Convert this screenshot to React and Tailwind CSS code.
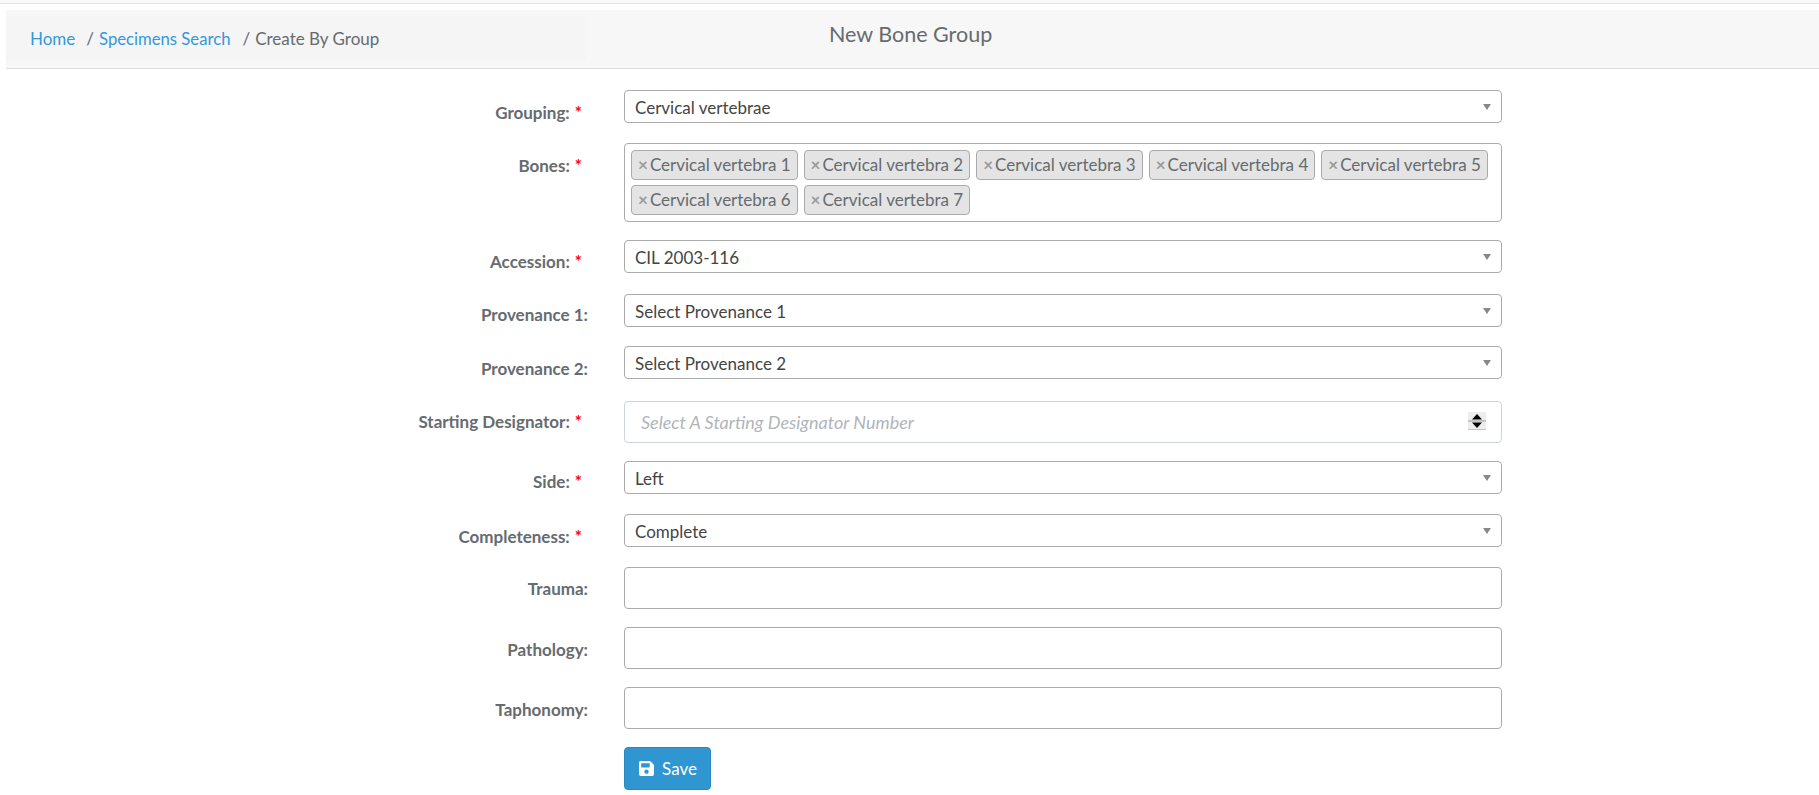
import { FaSave } from "react-icons/fa";

const BONES = [
  "Cervical vertebra 1",
  "Cervical vertebra 2",
  "Cervical vertebra 3",
  "Cervical vertebra 4",
  "Cervical vertebra 5",
  "Cervical vertebra 6",
  "Cervical vertebra 7",
];

function Label({ children, required, className = "" }) {
  return (
    <div className={`h-[33px] w-[582px] shrink-0 text-right font-bold text-[#666b6f] ${required ? "pr-[6px]" : ""} ${className}`}>
      {children}
      {required && <span className="ml-[5px] text-[#ff0000]">*</span>}
    </div>
  );
}

function Select({ value }) {
  return (
    <div className="relative flex h-[33px] w-[878px] items-center rounded-[4px] border border-[#aaaaaa] bg-white pl-[10px] pt-[2px] text-[#444444]">
      {value}
      <span className="absolute right-[10px] top-[13px] h-0 w-0 border-x-[4px] border-t-[6px] border-x-transparent border-t-[#888888]" />
    </div>
  );
}

function TextInput() {
  return (
    <input
      type="text"
      className="h-[42px] w-[878px] rounded-[4px] border border-[#aaaaaa] bg-white px-[16px] outline-none"
    />
  );
}

function Spinner() {
  return (
    <svg className="absolute right-[16px] top-[11px]" width="18" height="18" viewBox="0 0 18 18">
      <rect width="18" height="18" fill="#ededed" />
      <rect y="8" width="18" height="2" fill="#c4c4c4" />
      <rect y="17" width="18" height="1" fill="#c4c4c4" />
      <path d="M9 2 L14 7.5 H4 Z" fill="#000000" />
      <path d="M9 16 L14 10.5 H4 Z" fill="#000000" />
    </svg>
  );
}

export default function App() {
  return (
    <div className="h-[795px] overflow-hidden bg-white font-['Lato','Open_Sans',sans-serif] text-[17px] leading-[24px] text-[#666b6f]">
      <div className="h-[4px] border-b border-[#e3e6e8] bg-[#f8f9fa]" />

      <div className="ml-[6px] mt-[6px] flex h-[59px] items-start border-b border-[#dddddd] bg-[#f7f7f7]">
        <div className="mt-[6px] flex h-[46px] w-[580px] items-center rounded-[4px] bg-[#f5f5f5] pb-[1px] pl-[24px]">
          <a className="text-[#3498db]">Home</a>
          <span className="ml-[11px] mr-[5px]">/</span>
          <a className="text-[16.7px] text-[#3498db]">Specimens Search</a>
          <span className="ml-[12px] mr-[5px]">/</span>
          <span>Create By Group</span>
        </div>
        <h1 className="ml-[243px] mt-[12px] text-[21.5px] leading-[24px] text-[#666b6f]">New Bone Group</h1>
      </div>

      <form className="mt-[21px] pl-[6px]">
        <div className="flex">
          <Label required className="pt-[11px]">Grouping:</Label>
          <div className="ml-[36px]"><Select value="Cervical vertebrae" /></div>
        </div>

        <div className="mt-[20px] flex">
          <Label required className="pt-[11px]">Bones:</Label>
          <div className="ml-[36px] flex h-[79px] w-[878px] flex-wrap content-start gap-x-[6px] gap-y-[5px] rounded-[4px] border border-[#aaaaaa] bg-white pl-[6px] pt-[6px]">
            {BONES.map((bone) => (
              <span
                key={bone}
                className="flex h-[30px] items-center rounded-[4px] border border-[#aaaaaa] bg-[#e4e4e4] px-[6px]"
              >
                <span className="mr-[2px] font-bold text-[#999999]">×</span>
                {bone}
              </span>
            ))}
          </div>
        </div>

        <div className="mt-[18px] flex">
          <Label required className="pt-[10px]">Accession:</Label>
          <div className="ml-[36px]"><Select value="CIL 2003-116" /></div>
        </div>

        <div className="mt-[21px] flex">
          <Label className="pt-[9px]">Provenance 1:</Label>
          <div className="ml-[36px]"><Select value="Select Provenance 1" /></div>
        </div>

        <div className="mt-[19px] flex">
          <Label className="pt-[11px]">Provenance 2:</Label>
          <div className="ml-[36px]"><Select value="Select Provenance 2" /></div>
        </div>

        <div className="mt-[22px] flex">
          <Label required className="pt-[9px]">Starting Designator:</Label>
          <div className="relative ml-[36px]">
            <input
              type="text"
              placeholder="Select A Starting Designator Number"
              className="h-[42px] w-[878px] rounded-[4px] border border-[#ced4da] bg-white px-[16px] text-[18px] italic outline-none placeholder:text-[#b0b5b9]"
            />
            <Spinner />
          </div>
        </div>

        <div className="mt-[18px] flex">
          <Label required className="pt-[9px]">Side:</Label>
          <div className="ml-[36px]"><Select value="Left" /></div>
        </div>

        <div className="mt-[20px] flex">
          <Label required className="pt-[11px]">Completeness:</Label>
          <div className="ml-[36px]"><Select value="Complete" /></div>
        </div>

        <div className="mt-[20px] flex">
          <Label className="pt-[10px]">Trauma:</Label>
          <div className="ml-[36px]"><TextInput /></div>
        </div>

        <div className="mt-[18px] flex">
          <Label className="pt-[11px]">Pathology:</Label>
          <div className="ml-[36px]"><TextInput /></div>
        </div>

        <div className="mt-[18px] flex">
          <Label className="pt-[11px]">Taphonomy:</Label>
          <div className="ml-[36px]"><TextInput /></div>
        </div>

        <div className="ml-[618px] mt-[18px]">
          <button
            type="button"
            className="flex h-[43px] w-[87px] items-center justify-center gap-[7px] rounded-[4px] border border-[#2a88bf] bg-[#3096d1] text-white"
          >
            <FaSave className="text-[17px]" />
            Save
          </button>
        </div>
      </form>
    </div>
  );
}
